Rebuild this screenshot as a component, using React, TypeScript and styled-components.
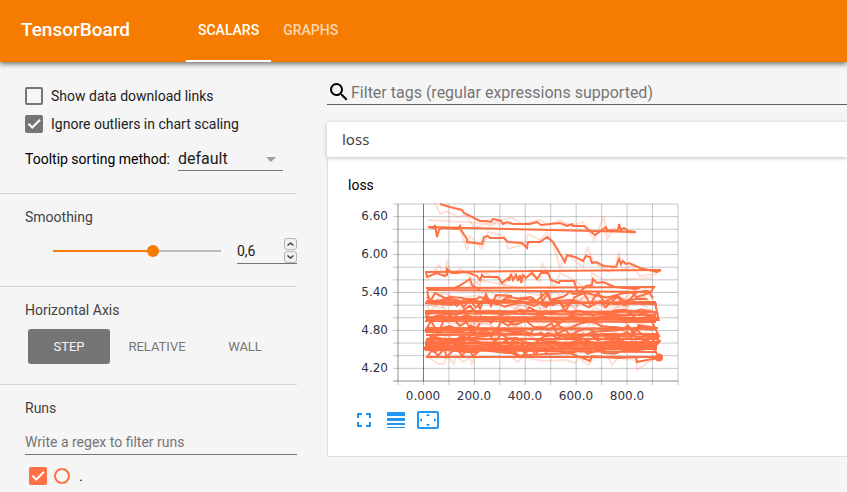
import React, { useState } from "react";
import styled, { createGlobalStyle } from "styled-components";

const Global = createGlobalStyle`
  * { box-sizing: border-box; }
  body {
    margin: 0;
    background: #f5f5f5;
    font-family: Roboto, "Liberation Sans", sans-serif;
    font-size: 14px;
    line-height: 20px;
    color: #212121;
  }
  button, input, select { font: inherit; color: inherit; margin: 0; padding: 0; border: 0; background: none; outline: none; }
  button { cursor: pointer; }
`;

const Page = styled.div`
  height: 100vh;
  display: flex;
  flex-direction: column;
  overflow: hidden;
`;

const Header = styled.header`
  display: flex;
  align-items: center;
  flex: none;
  height: 62px;
  padding-left: 21px;
  background: #f57c00;
  color: #fff;
  box-shadow: 0 2px 5px rgba(0, 0, 0, 0.55);
  z-index: 1;
`;

const Brand = styled.h1`
  margin: 0;
  width: 165px;
  padding-bottom: 2px;
  font-size: 19px;
  font-weight: 500;
`;

const Tabs = styled.nav`
  display: flex;
  align-self: stretch;
`;

const Tab = styled.button<{ $active?: boolean }>`
  padding: 0 12px;
  font-size: 14px;
  font-weight: 500;
  text-transform: uppercase;
  color: ${(p) => (p.$active ? "#fff" : "rgba(255, 255, 255, 0.7)")};
  border-bottom: 2px solid ${(p) => (p.$active ? "#fff" : "transparent")};
`;

const Body = styled.div`
  flex: 1;
  display: flex;
  min-height: 0;
`;

const Sidebar = styled.aside`
  flex: none;
  width: 297px;
`;

const Section = styled.section<{ $bottom?: number }>`
  padding: 13px 0 ${(p) => p.$bottom ?? 22}px 25px;
  & + & { border-top: 1px solid #d5d5d5; }
`;

const Options = styled(Section)`
  padding-top: 24px;
`;

const SectionTitle = styled.h2`
  margin: 0;
  font-size: 14px;
  font-weight: 400;
  line-height: 20px;
  color: #424242;
`;

const CheckLabel = styled.label`
  display: flex;
  align-items: center;
  gap: 8px;
  height: 20px;
  margin-bottom: 8px;
`;

const CheckFrame = styled.span`
  display: grid;
  width: 18px;
  height: 18px;
  > * { grid-area: 1 / 1; }
  svg { pointer-events: none; display: none; }
  input:checked + svg { display: block; }
`;

const CheckInput = styled.input<{ $color: string }>`
  appearance: none;
  width: 18px;
  height: 18px;
  border: 2px solid ${(p) => p.$color};
  border-radius: 2px;
  &:checked { background: ${(p) => p.$color}; }
`;

function Check({ color = "#757575", ...rest }: { color?: string; defaultChecked?: boolean; "aria-label"?: string }) {
  return (
    <CheckFrame>
      <CheckInput type="checkbox" $color={color} {...rest} />
      <svg width="18" height="18" viewBox="0 0 18 18" fill="none" stroke="#fff" strokeWidth="2">
        <path d="M3.5 8.7 7.3 12.5 15 4.8" />
      </svg>
    </CheckFrame>
  );
}

const SortRow = styled.div`
  display: flex;
  gap: 8px;
  margin-top: 14px;
  line-height: 22px;
  color: #000;
`;

const SelectBox = styled.div`
  display: grid;
  width: 105px;
  border-bottom: 1px solid #757575;
  > * { grid-area: 1 / 1; }
  svg { justify-self: end; align-self: center; margin-right: 7px; pointer-events: none; }
`;

const Select = styled.select`
  appearance: none;
  height: 22px;
  font-size: 16px;
  color: #212121;
`;

const SmoothRow = styled.div`
  display: flex;
  align-items: center;
  margin-top: 11px;
  height: 26px;
  padding-left: 28px;
  gap: 16px;
`;

const Slider = styled.input`
  appearance: none;
  flex: 1;
  min-width: 0;
  height: 12px;
  background: linear-gradient(#f57c00, #f57c00) left center / 60% 2px no-repeat,
    linear-gradient(#bdbdbd, #bdbdbd) center / 100% 2px no-repeat;
  &::-webkit-slider-thumb {
    appearance: none;
    width: 12px;
    height: 12px;
    border-radius: 50%;
    background: #f57c00;
  }
`;

const NumberBox = styled.div`
  display: flex;
  width: 60px;
  height: 26px;
  border-bottom: 1px solid #757575;
`;

const NumberInput = styled.input`
  flex: 1;
  min-width: 0;
`;

const Spinner = styled.div`
  display: flex;
  flex-direction: column;
  gap: 1px;
  width: 13px;
`;

const SpinButton = styled.button`
  display: flex;
  align-items: center;
  justify-content: center;
  height: 12px;
  background: #f2f2f2;
  border: 1px solid #b5b5b5;
  border-radius: 3px;
`;

const Segments = styled.div`
  display: flex;
  gap: 6px;
  margin: 9px 0 0 3px;
`;

const Segment = styled.button<{ $active?: boolean }>`
  min-width: 82px;
  height: 35px;
  font-size: 13px;
  text-transform: uppercase;
  border-radius: 3px;
  color: ${(p) => (p.$active ? "#f5f5f5" : "#757575")};
  background: ${(p) => (p.$active ? "#757575" : "transparent")};
`;

const RunsFilter = styled.input`
  display: block;
  width: 100%;
  height: 24px;
  margin-top: 13px;
  padding-bottom: 2px;
  border-bottom: 1px solid #757575;
  &::placeholder { color: #757575; opacity: 1; }
`;

const RunRow = styled.div`
  display: flex;
  align-items: center;
  gap: 7px;
  margin-top: 12px;
  padding-left: 4px;
  height: 18px;
`;

const RunDot = styled.button`
  width: 16px;
  height: 16px;
  border: 2px solid #ff7043;
  border-radius: 50%;
`;

const RunName = styled.span`
  padding-left: 2px;
`;

const Main = styled.main`
  flex: 1;
  min-width: 0;
  padding: 18px 0 0 30px;
`;

const TagFilter = styled.label`
  display: flex;
  align-items: center;
  height: 25px;
  border-bottom: 1px solid #616161;
`;

const TagInput = styled.input`
  flex: 1;
  padding-top: 2px;
  font-size: 16px;
  &::placeholder { color: #757575; opacity: 1; }
`;

const Card = styled.section`
  margin-top: 17px;
`;

const CardHeader = styled.h2`
  position: relative;
  margin: 0;
  padding-left: 15px;
  background: #fff;
  font: 400 15px/35px "Noto Sans", "Open Sans", sans-serif;
  color: #424242;
  box-shadow: 0 1px 4px rgba(0, 0, 0, 0.25);
`;

const CardBody = styled.div`
  padding: 18px 0 24px 20px;
  background: #fff;
  border: 1px solid #dedede;
  border-width: 0 0 1px 1px;
`;

const ChartTitle = styled.h3`
  margin: 0;
  font-size: 14px;
  font-weight: 400;
  line-height: 20px;
  color: #000;
`;

const ChartSvg = styled.svg`
  display: block;
  margin-top: 3px;
  text {
    font-family: "DejaVu Sans", sans-serif;
    font-size: 12px;
    fill: #32313f;
  }
`;

const ChartTools = styled.div`
  display: flex;
  gap: 8px;
  margin: 4px 0 0 4px;
`;

const ToolButton = styled.button`
  display: flex;
  align-items: center;
  justify-content: center;
  width: 24px;
  height: 24px;
  color: #2196f3;
`;

type Points = string;

const upperRuns: Points[] = [
  "440,204 450,207 462,210 464,213 468,215 480,221 486,221 491,222 493,219 501,221 503,224 507,222 513,224 530,224 537,222 541,225 560,223 567,226 572,224 573,226 584,226 595,235 606,227 607,230 618,231 619,224 621,230 624,228 628,231 636,232",
  "428,227 636,232",
  "428,227 434,228 435,225 437,237 439,230 442,228 458,229 460,226 461,230 467,239 467,242 482,244 484,237 488,236 490,238 504,238 508,242 522,243 527,248 528,242 540,242 547,237 553,242 565,262 567,255 575,257 583,261 586,256 590,257 592,263 596,262 604,266 616,267 619,259 621,264 623,261 626,264 629,263 640,268 657,272 661,270",
  "425,272 661,270",
  "426,272 427,277 437,273 444,276 447,275 447,269 452,273 456,273 467,272 477,276 480,280 482,275 484,277 498,277 502,283 508,278 509,281 511,274 513,280 516,275 518,281 520,275 521,283 523,275 526,278 532,273 537,279 541,273 548,273 551,280 559,283 560,281 574,281 577,290 580,292 586,286 592,285 593,279 597,283 603,282 615,287 635,289 640,288",
  "426,288 654,287 650,293 643,291",
  "427,290 652,292",
  "452,289 459,286 470,279 472,285 480,290",
];

const upperRaw: Points[] = [
  "435,203 440,214 447,211 457,217 466,215 474,227 486,224 491,226 500,220 512,218 522,224 540,220 549,225 560,220 572,226 583,222 594,240 604,216 607,239 614,228 620,231 636,234",
  "428,220 482,223 520,224",
  "460,228 467,250 470,236 482,249 488,232 504,236 508,249 525,244 528,234 540,240 547,232 553,244 560,268 565,258 570,257 583,267 587,247 594,262 609,272 616,265 619,252 622,270 632,266 640,276 657,274",
  "427,281 439,265 445,278 447,260 451,274 461,269 480,286 482,272 500,280 504,286 512,271 523,282 532,270 540,283 542,264 549,274 554,288 560,273 576,281 590,293 592,273 605,280 652,278",
  "461,292 480,280 520,288",
];

interface Band {
  y: number;
  amp: number;
  seed: number;
}

const bands: Band[] = [
  { y: 297, amp: 5, seed: 4 },
  { y: 301, amp: 5, seed: 9 },
  { y: 303, amp: 3, seed: 15 },
  { y: 311, amp: 5, seed: 22 },
  { y: 313, amp: 3, seed: 31 },
  { y: 318, amp: 3, seed: 43 },
  { y: 320, amp: 4, seed: 56 },
  { y: 327, amp: 6, seed: 64 },
  { y: 330, amp: 4, seed: 71 },
  { y: 335, amp: 5, seed: 83 },
  { y: 338, amp: 5, seed: 97 },
  { y: 341, amp: 4, seed: 108 },
  { y: 344, amp: 4, seed: 119 },
  { y: 346, amp: 4, seed: 127 },
  { y: 348, amp: 4, seed: 136 },
  { y: 350, amp: 3, seed: 151 },
];

function jagged({ y, amp, seed }: Band, factor = 1): Points {
  let state = seed * 7919;
  const random = () => {
    state = (state * 16807) % 2147483647;
    return state / 2147483647;
  };
  random();
  const points: string[] = [];
  let x = 425 + random() * 3;
  while (x < 658) {
    const swing = (random() - 0.5) * 2;
    points.push(`${x.toFixed(1)},${(y + swing * Math.abs(swing) * amp * factor * 1.4).toFixed(1)}`);
    x += 3 + random() * 10;
  }
  return points.join(" ");
}

const straightRuns: Points[] = [
  "426,301 657,304", "425,303 656,302", "425,311 657,312", "425,313 656,315", "425,317 659,318",
  "426,318 658,319", "426,319 658,320", "425,321 656,322", "426,328 656,329", "425,330 658,328", "425,332 659,337",
  "426,335 657,334", "426,339 659,339", "425,342 658,344", "425,344 658,342", "426,346 656,345", "424,348 657,347",
  "424,349 657,349", "425,350 656,352", "426,357 659,357",
];

const edgeRuns: Points[] = [
  "427,291 430,302 435,293 443,297 450,301 457,306 465,299 476,299 480,309 486,294 491,306 496,295 512,296",
  "541,291 542,302 548,293 553,305 559,301 565,311 575,297 584,293 590,304 598,292 604,302 617,296 624,305 637,292 648,291 653,298",
  "427,357 433,349 438,356 444,349 447,357 456,347 462,356 468,348 473,356 481,350 507,353 516,353 521,357 527,352",
  "512,353 518,356 526,355 570,353 590,361 592,356 617,358 636,357 637,362 657,358 659,357",
  "655,303 659,321",
  "652,322 659,336 649,335 660,341 654,348 657,354",
  "425,331 431,321 438,333 443,322 450,315 460,326 466,322 474,333 480,323",
];

const lowerRaw: Points[] = [
  "428,357 437,363 438,364 444,364 446,355 454,364 456,355 463,362 470,358 472,365 474,357",
  "512,357 518,362 522,357 543,361 566,360 575,363 579,358 588,365 594,358 609,358 612,365 618,358 636,360 637,370 650,361 659,357",
  "541,299 548,303 570,303 590,295 603,307 618,297 640,303 654,312",
];

const xStep = 280 / 11;
const yStep = 177 / 14;

function LossChart() {
  return (
    <ChartSvg width="340" height="206" viewBox="348 198 340 206" role="img" aria-label="loss by step">
      <g stroke="#000" strokeOpacity="0.22" fill="none">
        {Array.from({ length: 12 }, (_, i) => {
          const x = 398 + i * xStep;
          return <path key={i} d={`M${x} 204V385`} />;
        })}
        {Array.from({ length: 15 }, (_, i) => {
          const y = 204 + i * yStep;
          return <path key={i} d={`M393 ${y}H678`} />;
        })}
        <path d="M423.5 204V381" strokeOpacity="0.4" />
        <path d="M393 381H678" strokeWidth="2" strokeOpacity="0.12" />
        <path d="M398 204V381" strokeWidth="2" strokeOpacity="0.12" />
      </g>
      <g stroke="#ff7043" strokeWidth="2" fill="none" strokeLinejoin="miter" strokeMiterlimit="3">
        <g strokeOpacity="0.22">
          {[...upperRaw, ...lowerRaw].map((points) => <polyline key={points} points={points} />)}
          {bands.map((band) => <polyline key={band.seed} points={jagged(band, band.y > 343 ? 1 : 1.5)} />)}
        </g>
        {[...upperRuns, ...straightRuns, ...edgeRuns].map((points) => <polyline key={points} points={points} />)}
        {bands.map((band) => <polyline key={band.seed} points={jagged({ ...band, seed: band.seed + 3 })} />)}
      </g>
      <circle cx="659" cy="357.5" r="4" fill="#ff7043" />
      <g textAnchor="end">
        {["6.60", "6.00", "5.40", "4.80", "4.20"].map((label, i) => (
          <text key={label} x="388" y={220 + i * 38}>{label}</text>
        ))}
      </g>
      <g textAnchor="middle">
        {["0.000", "200.0", "400.0", "600.0", "800.0"].map((label, i) => (
          <text key={label} x={423 + i * 51} y="400">{label}</text>
        ))}
      </g>
    </ChartSvg>
  );
}

export default function App() {
  const [axis, setAxis] = useState("Step");
  return (
    <Page>
      <Global />
      <Header>
        <Brand>TensorBoard</Brand>
        <Tabs>
          <Tab $active>Scalars</Tab>
          <Tab>Graphs</Tab>
        </Tabs>
      </Header>
      <Body>
        <Sidebar>
          <Options>
            <CheckLabel><Check />Show data download links</CheckLabel>
            <CheckLabel><Check defaultChecked />Ignore outliers in chart scaling</CheckLabel>
            <SortRow>
              <label htmlFor="sorting">Tooltip sorting method:</label>
              <SelectBox>
                <Select id="sorting"><option>default</option></Select>
                <svg width="10" height="5" viewBox="0 0 10 5"><path d="M0 0h10L5 5z" fill="#9e9e9e" /></svg>
              </SelectBox>
            </SortRow>
          </Options>
          <Section>
            <SectionTitle>Smoothing</SectionTitle>
            <SmoothRow>
              <Slider type="range" min="0" max="1" step="0.1" defaultValue="0.6" aria-label="Smoothing" />
              <NumberBox>
                <NumberInput inputMode="decimal" defaultValue="0,6" aria-label="Smoothing value" />
                <Spinner>
                  <SpinButton aria-label="Increase">
                    <svg width="7" height="4" viewBox="0 0 7 4" fill="none" stroke="#424242" strokeWidth="1.4"><path d="M.5 3.5 3.5 1l3 2.5" /></svg>
                  </SpinButton>
                  <SpinButton aria-label="Decrease">
                    <svg width="7" height="4" viewBox="0 0 7 4" fill="none" stroke="#424242" strokeWidth="1.4"><path d="M.5.5 3.5 3l3-2.5" /></svg>
                  </SpinButton>
                </Spinner>
              </NumberBox>
            </SmoothRow>
          </Section>
          <Section $bottom={20}>
            <SectionTitle>Horizontal Axis</SectionTitle>
            <Segments>
              {["Step", "Relative", "Wall"].map((name) => (
                <Segment key={name} $active={axis === name} onClick={() => setAxis(name)}>{name}</Segment>
              ))}
            </Segments>
          </Section>
          <Section>
            <SectionTitle>Runs</SectionTitle>
            <RunsFilter placeholder="Write a regex to filter runs" aria-label="Filter runs" />
            <RunRow>
              <Check color="#ff7043" defaultChecked aria-label="Show run ." />
              <RunDot aria-label="Show only run ." />
              <RunName>.</RunName>
            </RunRow>
          </Section>
        </Sidebar>
        <Main>
          <TagFilter>
            <svg width="24" height="24" viewBox="0 0 24 24" fill="#000">
              <path d="M15.5 14h-.79l-.28-.27A6.471 6.471 0 0 0 16 9.500 6.500 6.500 0 1 0 9.500 16c1.610 0 3.090-.59 4.230-1.570l.27.28v.79l5 4.990L20.490 19l-4.990-5zm-6 0C7.010 14 5 11.990 5 9.500S7.010 5 9.500 5 14 7.010 14 9.500 11.990 14 9.500 14z" />
            </svg>
            <TagInput placeholder="Filter tags (regular expressions supported)" aria-label="Filter tags" />
          </TagFilter>
          <Card>
            <CardHeader>loss</CardHeader>
            <CardBody>
              <ChartTitle>loss</ChartTitle>
              <LossChart />
              <ChartTools>
                <ToolButton aria-label="Fullscreen">
                  <svg width="24" height="24" viewBox="0 0 24 24" fill="currentColor">
                    <path d="M7 14H5v5h5v-2H7v-3zm-2-4h2V7h3V5H5v5zm12 7h-3v2h5v-5h-2v3zM14 5v2h3v3h2V5h-5z" />
                  </svg>
                </ToolButton>
                <ToolButton aria-label="Toggle log scale">
                  <svg width="24" height="24" viewBox="0 0 24 24" fill="currentColor">
                    <path d="M3 4h18v4H3zM3 10h18v3H3zM3 15h18v2H3zM3 19h18v1H3z" />
                  </svg>
                </ToolButton>
                <ToolButton aria-label="Fit domain to data">
                  <svg width="24" height="24" viewBox="0 0 24 24" fill="currentColor">
                    <path d="M12 5.500 10 8h4l-2-2.500zM18 10v4l2.500-2L18 10zM6 10l-2.500 2L6 14v-4zM14 16h-4l2 2.500 2-2.500zM21 3H3c-1.100 0-2 .9-2 2v14c0 1.100.9 2 2 2h18c1.100 0 2-.9 2-2V5c0-1.100-.9-2-2-2zm0 16H3V5h18v14z" />
                  </svg>
                </ToolButton>
              </ChartTools>
            </CardBody>
          </Card>
        </Main>
      </Body>
    </Page>
  );
}
